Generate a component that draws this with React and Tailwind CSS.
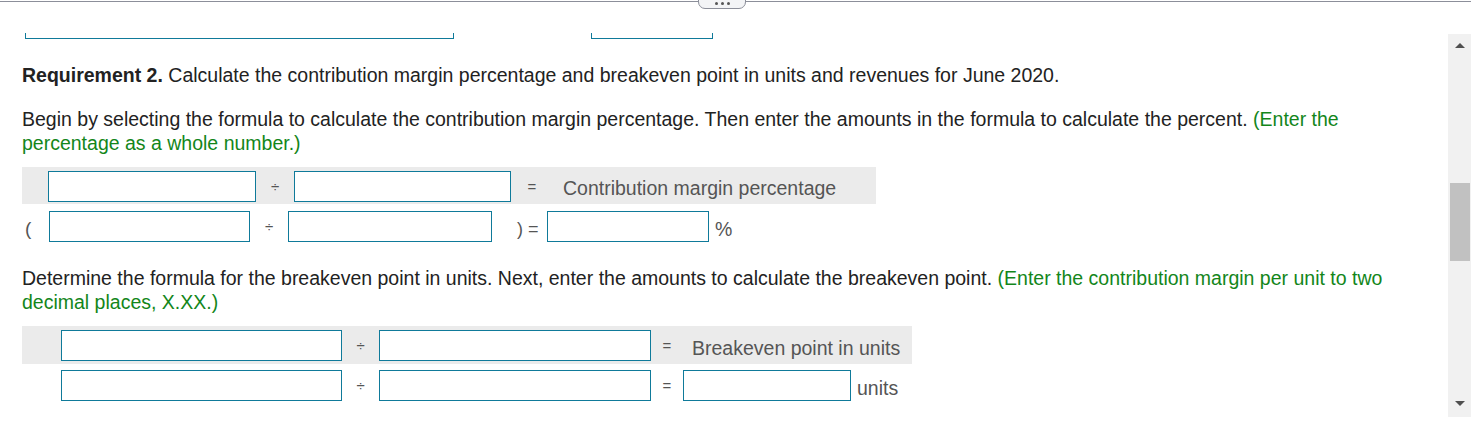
import React from 'react';

const inputCls = 'h-[31px] border border-[#0f7a9a] bg-white';

function Field({ w }) {
  return <div className={inputCls} style={{ width: w }} />;
}

function Op({ children, w }) {
  return (
    <div className="mt-[2px] flex justify-center text-[15px] text-[#555]" style={{ width: w }}>
      {children}
    </div>
  );
}

function ScrollBar() {
  return (
    <div className="mt-[32px] flex h-[383px] w-[23px] flex-col items-center bg-[#f1f1f1]">
      <div className="mt-[9px] h-0 w-0 border-x-[5px] border-b-[5px] border-x-transparent border-b-[#505050]" />
      <div className="mt-[135px] h-[78px] w-[20px] bg-[#c1c1c1]" />
      <div className="mt-[140px] h-0 w-0 border-x-[5px] border-t-[5px] border-x-transparent border-t-[#505050]" />
    </div>
  );
}

export default function App() {
  return (
    <div className="h-[430px] overflow-hidden bg-white font-['Liberation_Sans',Arial,sans-serif] text-[#222]">
      {/* top divider with collapse handle */}
      <div className="relative mt-px border-t border-[#8c8f9a]">
        <div className="absolute left-[698px] top-[-10px] flex h-[17px] w-[48px] items-end justify-center gap-[3px] rounded-[7px] border border-[#8c8f9a] bg-[#f3f4f6] pb-[3px]">
          <span className="h-[3px] w-[3px] rounded-full bg-[#555]" />
          <span className="h-[3px] w-[3px] rounded-full bg-[#555]" />
          <span className="h-[3px] w-[3px] rounded-full bg-[#555]" />
        </div>
      </div>

      <div className="flex">
        <div className="flex-1 pl-[22px]">
          {/* bottoms of previous inputs */}
          <div className="mt-[31px] flex">
            <div className="ml-[3px] h-[6px] w-[429px] border-x border-b border-[#0f7a9a]" />
            <div className="ml-[137px] h-[6px] w-[122px] border-x border-b border-[#0f7a9a]" />
          </div>

          <p className="mt-[24px] text-[19.5px] leading-[24px]">
            <span className="font-bold">Requirement 2.</span> Calculate the contribution margin percentage and breakeven point in units and revenues for June 2020.
          </p>

          <p className="mt-[20px] w-[1400px] text-[19.5px] leading-[24px]">
            Begin by selecting the formula to calculate the contribution margin percentage. Then enter the amounts in the formula to calculate the percent.{' '}
            <span className="text-[#13861a]">(Enter the percentage as a whole number.)</span>
          </p>

          <div className="mt-[12px] flex h-[37px] w-[854px] items-center bg-[#ebebeb] pl-[26px] pt-[2px]">
            <Field w={208} />
            <Op w={38}>÷</Op>
            <Field w={217} />
            <Op w={42}>=</Op>
            <span className="ml-[10px] mt-[4px] text-[19.5px] text-[#555]">Contribution margin percentage</span>
          </div>

          <div className="mt-[7px] flex h-[30px] items-center">
            <span className="ml-[3px] mt-[6px] w-[24px] text-[19px] text-[#555]">(</span>
            <Field w={201} />
            <Op w={38}>÷</Op>
            <Field w={204} />
            <span className="ml-[25px] mt-[6px] w-[30px] text-[18px] text-[#555]">) =</span>
            <Field w={162} />
            <span className="ml-[6px] mt-[7px] text-[19.5px] text-[#555]">%</span>
          </div>

          <p className="mt-[25px] w-[1400px] text-[19.5px] leading-[24px]">
            Determine the formula for the breakeven point in units. Next, enter the amounts to calculate the breakeven point.{' '}
            <span className="text-[#13861a]">(Enter the contribution margin per unit to two decimal places, X.XX.)</span>
          </p>

          <div className="mt-[12px] flex h-[38px] w-[890px] items-center bg-[#ebebeb] pl-[39px]">
            <Field w={281} />
            <Op w={37}>÷</Op>
            <Field w={272} />
            <Op w={32}>=</Op>
            <span className="ml-[9px] mt-[7px] text-[19.5px] text-[#555]">Breakeven point in units</span>
          </div>

          <div className="mt-[6px] flex h-[30px] items-center pl-[39px]">
            <Field w={281} />
            <Op w={37}>÷</Op>
            <Field w={272} />
            <Op w={32}>=</Op>
            <Field w={168} />
            <span className="ml-[6px] mt-[7px] text-[19.5px] text-[#555]">units</span>
          </div>
        </div>
        <ScrollBar />
      </div>
    </div>
  );
}
